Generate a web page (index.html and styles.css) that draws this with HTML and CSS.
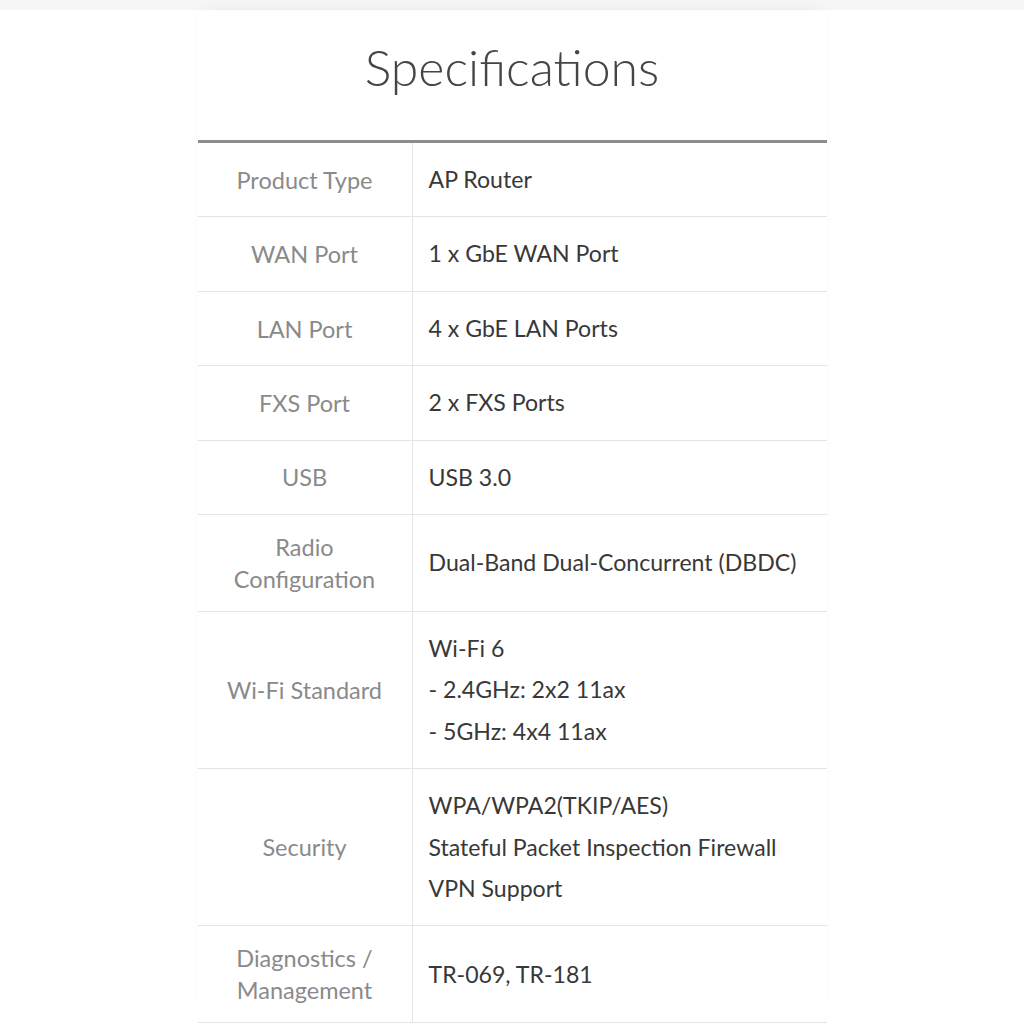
FILE: index.html
```html
<!DOCTYPE html>
<html>
<head>
<meta charset="utf-8">
<link rel="stylesheet" href="styles.css">
</head>
<body>
<div class="topband"></div>
<main class="card">
  <h1 class="title">Specifications</h1>
  <div class="spec-table">
    <div class="row">
      <div class="label">Product Type</div>
      <div class="value"><p>AP Router</p></div>
    </div>
    <div class="row">
      <div class="label">WAN Port</div>
      <div class="value"><p>1 x GbE WAN Port</p></div>
    </div>
    <div class="row">
      <div class="label">LAN Port</div>
      <div class="value"><p>4 x GbE LAN Ports</p></div>
    </div>
    <div class="row">
      <div class="label">FXS Port</div>
      <div class="value"><p>2 x FXS Ports</p></div>
    </div>
    <div class="row">
      <div class="label">USB</div>
      <div class="value"><p>USB 3.0</p></div>
    </div>
    <div class="row">
      <div class="label">Radio<br>Configuration</div>
      <div class="value"><p>Dual-Band Dual-Concurrent (DBDC)</p></div>
    </div>
    <div class="row">
      <div class="label">Wi-Fi Standard</div>
      <div class="value"><p>Wi-Fi 6</p><p>- 2.4GHz: 2x2 11ax</p><p>- 5GHz: 4x4 11ax</p></div>
    </div>
    <div class="row">
      <div class="label">Security</div>
      <div class="value"><p>WPA/WPA2(TKIP/AES)</p><p>Stateful Packet Inspection Firewall</p><p>VPN Support</p></div>
    </div>
    <div class="row">
      <div class="label">Diagnostics /<br>Management</div>
      <div class="value"><p>TR-069, TR-181</p></div>
    </div>
  </div>
</main>
</body>
</html>
```
FILE: styles.css
```css
html, body {
  margin: 0;
  padding: 0;
  background: #ffffff;
}
body {
  font-family: Lato, "Noto Sans", sans-serif;
  overflow: hidden;
  height: 1024px;
}
.topband {
  height: 10px;
  background: #f6f6f6;
}
.card {
  width: 629px;
  margin: 0 auto;
  padding-top: 2px;
  box-shadow: 0 -6px 14px -8px rgba(0,0,0,0.08);
}
.title {
  margin: 0;
  height: 128px;
  box-sizing: border-box;
  padding-top: 24px;
  text-align: center;
  font-size: 50px;
  line-height: 62px;
  font-weight: 300;
  color: #454545;
}
.spec-table {
  border-top: 3px solid #8c8c8c;
}
.row {
  display: grid;
  grid-template-columns: 215px 1fr;
  border-bottom: 1px solid #e4e4e4;
}
.label {
  display: flex;
  align-items: center;
  justify-content: center;
  text-align: center;
  border-right: 1px solid #e4e4e4;
  color: #8a8a8a;
  font-size: 23.5px;
  line-height: 32px;
  padding: 16px 0;
}
.value {
  display: flex;
  flex-direction: column;
  justify-content: center;
  padding: 16px 0 16px 16px;
  color: #383838;
  font-size: 23.1px;
  line-height: 41.4px;
}
.value p {
  margin: 0;
}
```
